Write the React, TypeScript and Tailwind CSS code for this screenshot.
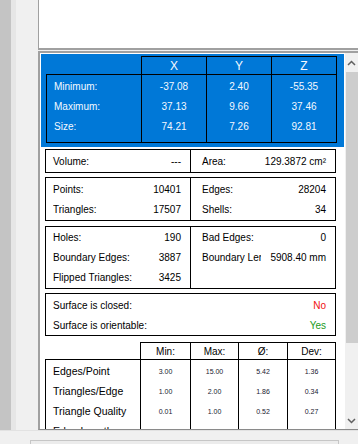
import React from "react";

const bounds = [
  { label: "Minimum:", v: ["-37.08", "2.40", "-55.35"] },
  { label: "Maximum:", v: ["37.13", "9.66", "37.46"] },
  { label: "Size:", v: ["74.21", "7.26", "92.81"] },
];

const stats = [
  { label: "Edges/Point", v: ["3.00", "15.00", "5.42", "1.36"] },
  { label: "Triangles/Edge", v: ["1.00", "2.00", "1.86", "0.34"] },
  { label: "Triangle Quality", v: ["0.01", "1.00", "0.52", "0.27"] },
  { label: "Edge Length", v: ["0.04", "9.38", "1.56", "0.71"] },
];

const statWidths = ["w-[50px]", "w-[48px]", "w-[49px]", "w-[48px]"];

function Row({
  label,
  value,
  right,
  valueBox,
}: {
  label: string;
  value: React.ReactNode;
  right?: boolean;
  valueBox?: string;
}) {
  return (
    <div className={`h-[20px] flex items-center whitespace-nowrap ${right ? "pl-[11px]" : "pl-[7px]"} pr-[9px]`}>
      <div className="flex-1 min-w-0 overflow-hidden">{label}</div>
      <div className={`shrink-0 text-right ${valueBox ?? ""}`}>{value}</div>
    </div>
  );
}

function Chevron({ up }: { up?: boolean }) {
  return (
    <svg width="9" height="6" viewBox="0 0 9 6">
      <path
        d={up ? "M1 5 L4.5 1.5 L8 5" : "M1 1 L4.5 4.5 L8 1"}
        fill="none"
        stroke="#606060"
        strokeWidth="1.5"
      />
    </svg>
  );
}

export default function App() {
  return (
    <div className="w-[358px] h-[444px] overflow-hidden bg-[#f0f0f0] font-['Liberation_Sans',Arial,sans-serif] text-[10px] text-black">
      <div className="h-[430px] flex">
        <div className="w-[11px] bg-[#c4c4c4]" />
        <div className="w-[5px] bg-[#e6e6e6]" />
        <div className="w-[23px] bg-[#f0f0f0]" />

        <div className="flex-1 flex flex-col">
          <div className="h-[50px] bg-white border-l border-b-2 border-[#a0a0a0]" />

          <div className="mt-px flex-1 flex bg-white border-t-2 border-l-2 border-[#a0a0a0] border-b border-b-[#8a8a8a] min-h-0">
            <div className="flex-1 min-w-0 overflow-hidden pt-px">
              {/* bounding box */}
              <div className="mx-px bg-[#0078d7] pl-[5px] pr-[7px] pt-[2px] pb-[4px] text-[#f4f8ff]">
                <div className="flex">
                  <div className="w-[95px]" />
                  {["X", "Y", "Z"].map((c, i) => (
                    <div
                      key={c}
                      className={`h-[18px] flex items-center justify-center text-[12px] border-t border-l border-black ${i === 2 ? "w-[66px] border-r" : "w-[65px]"}`}
                    >
                      {c}
                    </div>
                  ))}
                </div>
                <div className="w-[291px] border border-black flex">
                  <div className="w-[94px] pt-px pb-[6px]">
                    {bounds.map((r) => (
                      <div key={r.label} className="h-[20px] flex items-center pl-[7px]">
                        {r.label}
                      </div>
                    ))}
                  </div>
                  {[0, 1, 2].map((c) => (
                    <div key={c} className="w-[65px] border-l border-black pt-px pb-[6px]">
                      {bounds.map((r) => (
                        <div key={r.label} className="h-[20px] flex items-center justify-center">
                          {r.v[c]}
                        </div>
                      ))}
                    </div>
                  ))}
                </div>
              </div>

              <div className="pl-[5px] flex flex-col">
                {/* volume / area */}
                <div className="mt-[2px] w-[291px] h-[24px] border border-black flex">
                  <div className="w-[144px]">
                    <div className="h-[22px] flex items-center pl-[7px] pr-[9px] pt-px">
                      <div className="flex-1">Volume:</div>
                      <div>---</div>
                    </div>
                  </div>
                  <div className="flex-1 border-l border-black">
                    <div className="h-[22px] flex items-center pl-[11px] pr-[9px] pt-px">
                      <div className="flex-1">Area:</div>
                      <div>129.3872 cm²</div>
                    </div>
                  </div>
                </div>

                {/* points */}
                <div className="mt-[4px] w-[291px] border border-black flex">
                  <div className="w-[144px] pt-px pb-px">
                    <Row label="Points:" value="10401" />
                    <Row label="Triangles:" value="17507" />
                  </div>
                  <div className="flex-1 border-l border-black pt-px pb-px">
                    <Row right label="Edges:" value="28204" />
                    <Row right label="Shells:" value="34" />
                  </div>
                </div>

                {/* holes */}
                <div className="mt-[5px] w-[291px] border border-black flex">
                  <div className="w-[144px] pb-px">
                    <Row label="Holes:" value="190" />
                    <Row label="Boundary Edges:" value="3887" />
                    <Row label="Flipped Triangles:" value="3425" />
                  </div>
                  <div className="flex-1 min-w-0 border-l border-black pb-px">
                    <Row right label="Bad Edges:" value="0" />
                    <Row right label="Boundary Length:" value="5908.40 mm" valueBox="w-[65px] bg-white" />
                  </div>
                </div>

                {/* surface */}
                <div className="mt-[4px] w-[291px] border border-black pt-px">
                  <Row label="Surface is closed:" value={<span className="text-[#f01010]">No</span>} />
                  <Row label="Surface is orientable:" value={<span className="text-[#1a9a1a]">Yes</span>} />
                </div>

                {/* statistics */}
                <div className="mt-[6px] flex">
                  <div className="w-[95px]" />
                  {["Min:", "Max:", "Ø:", "Dev:"].map((h, i) => (
                    <div
                      key={h}
                      className={`h-[17px] flex items-center justify-center border-t border-l border-black ${statWidths[i]} ${i === 3 ? "border-r w-[49px]" : ""}`}
                    >
                      {h}
                    </div>
                  ))}
                </div>
                <div className="w-[291px] border-t border-l border-r border-black flex">
                  <div className="w-[94px] pt-[2px]">
                    {stats.map((r) => (
                      <div key={r.label} className="h-[20px] flex items-center pl-[7px] text-[10.5px] whitespace-nowrap">
                        {r.label}
                      </div>
                    ))}
                  </div>
                  {[0, 1, 2, 3].map((c) => (
                    <div key={c} className={`${statWidths[c]} border-l border-black pt-[2px]`}>
                      {stats.map((r) => (
                        <div key={r.label} className="h-[20px] flex items-center justify-center text-[7px] text-[#202030]">
                          {r.v[c]}
                        </div>
                      ))}
                    </div>
                  ))}
                </div>
              </div>
            </div>

            {/* scrollbar */}
            <div className="w-[13px] shrink-0 bg-[#f0f0f0] flex flex-col">
              <div className="h-[17px] flex items-center justify-center pt-[2px]">
                <Chevron up />
              </div>
              <div className="mt-[2px] h-[271px] ml-px bg-[#cdcdcd]" />
              <div className="flex-1" />
              <div className="h-[17px] flex items-center justify-center">
                <Chevron />
              </div>
            </div>
          </div>
        </div>
      </div>

      <div className="h-[14px] border-t border-[#e2e2e2] pt-[9px] pl-[30px]">
        <div className="w-[309px] h-[5px] border-t border-l border-r border-[#c6c6c6] bg-[#ececec]" />
      </div>
    </div>
  );
}
